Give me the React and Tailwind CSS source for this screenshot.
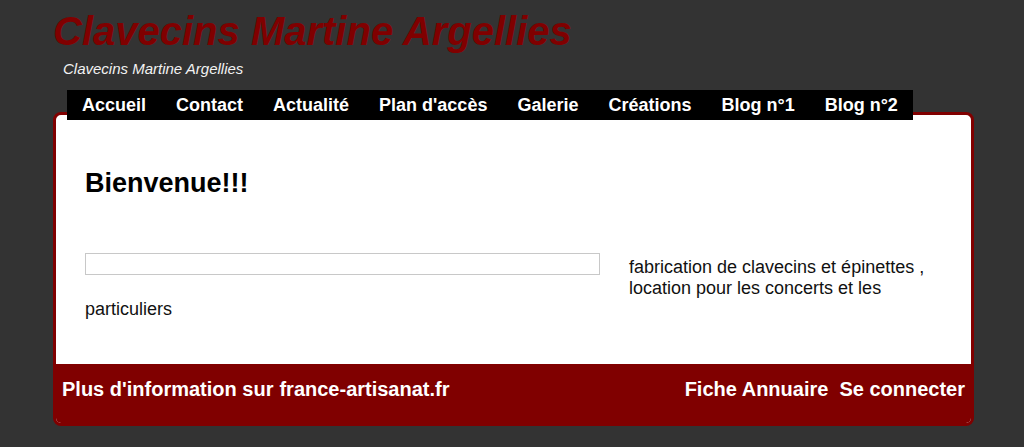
export default function App() {
  const nav = ["Accueil", "Contact", "Actualité", "Plan d'accès", "Galerie", "Créations", "Blog n°1", "Blog n°2"];
  return (
    <div className="min-h-screen w-full bg-[#333333] font-['Liberation_Sans',Arial,sans-serif]">
      <div className="ml-[53px] w-[921px]">
        <h1 className="pt-[8px] text-[40px] leading-[46px] font-bold italic text-[#800000] whitespace-nowrap">
          Clavecins Martine Argellies
        </h1>
        <div className="mt-[6px] ml-[10px] text-[15px] leading-[18px] italic text-[#f2f2f2]">
          Clavecins Martine Argellies
        </div>
        <nav className="relative z-10 mt-[12px] ml-[14px] flex w-max bg-black">
          {nav.map((n) => (
            <a key={n} className="px-[15px] h-[30px] leading-[30px] text-[18px] font-bold text-white whitespace-nowrap">
              {n}
            </a>
          ))}
        </nav>
        <div className="-mt-[8px] rounded-[8px] border-[3px] border-[#800000] bg-white overflow-hidden">
          <div className="px-[29px] pt-[52px] pb-[44px] text-black">
            <h2 className="text-[27px] leading-[32px] font-bold">Bienvenue!!!</h2>
            <div className="mt-[54px] pt-[4px] text-[18px] leading-[21px] text-[#111]">
              <div className="float-left -mt-[4px] mr-[29px] mb-[8px] h-[22px] w-[515px] border border-[#c8c8c8]" />
              fabrication de clavecins et épinettes , location pour les concerts et les particuliers
            </div>
          </div>
          <div className="flex bg-[#800000] px-[6px] pt-[13px] pb-[22px] text-[20px] leading-[24px] font-bold text-white whitespace-nowrap">
            <span>Plus d'information sur</span>
            <span className="ml-[6px]">france-artisanat.fr</span>
            <span className="ml-auto">Fiche Annuaire</span>
            <span className="ml-[11px]">Se connecter</span>
          </div>
        </div>
      </div>
    </div>
  );
}
